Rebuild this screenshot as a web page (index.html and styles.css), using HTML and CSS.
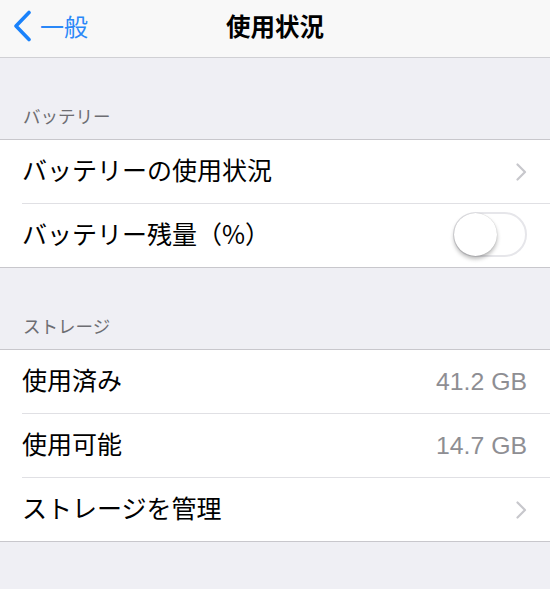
FILE: index.html
```html
<!DOCTYPE html>
<html lang="ja">
<head>
<meta charset="utf-8">
<title>使用状況</title>
<link rel="stylesheet" href="styles.css">
</head>
<body>
<header class="navbar">
  <div class="nav-left">
    <svg class="back-chevron" width="20" height="32" viewBox="0 0 20 32"><path d="M17 2.5 L4 16 L17 29.5" fill="none" stroke="#1a82fb" stroke-width="3.6" stroke-linecap="round" stroke-linejoin="round"/></svg>
    <span class="back-text">一般</span>
  </div>
  <div class="nav-title">使用状況</div>
  <div class="nav-right"></div>
</header>

<div class="section-header">バッテリー</div>
<div class="group">
  <div class="row">
    <div class="row-inner">
      <span class="label">バッテリーの使用状況</span>
      <svg class="chevron" width="11" height="18" viewBox="0 0 11 18"><path d="M1.5 1.5 L9 9 L1.5 16.5" fill="none" stroke="#c7c7cc" stroke-width="2.2" stroke-linecap="round" stroke-linejoin="round"/></svg>
    </div>
  </div>
  <div class="row">
    <div class="row-inner last">
      <span class="label">バッテリー残量（%）</span>
      <span class="toggle"><span class="knob"></span></span>
    </div>
  </div>
</div>

<div class="section-header">ストレージ</div>
<div class="group">
  <div class="row">
    <div class="row-inner">
      <span class="label">使用済み</span>
      <span class="value">41.2 GB</span>
    </div>
  </div>
  <div class="row">
    <div class="row-inner">
      <span class="label">使用可能</span>
      <span class="value">14.7 GB</span>
    </div>
  </div>
  <div class="row">
    <div class="row-inner last">
      <span class="label">ストレージを管理</span>
      <svg class="chevron" width="11" height="18" viewBox="0 0 11 18"><path d="M1.5 1.5 L9 9 L1.5 16.5" fill="none" stroke="#c7c7cc" stroke-width="2.2" stroke-linecap="round" stroke-linejoin="round"/></svg>
    </div>
  </div>
</div>
</body>
</html>
```

FILE: styles.css
```css
html, body {
  margin: 0;
  padding: 0;
}
body {
  background: #efeff4;
  font-family: "Noto Sans CJK JP", "Noto Sans", sans-serif;
  color: #000;
  width: 550px;
  height: 589px;
  overflow: hidden;
}
.navbar {
  height: 57px;
  background: #f8f8f8;
  border-bottom: 1px solid #d0d0d4;
  display: grid;
  grid-template-columns: 1fr auto 1fr;
  align-items: center;
}
.nav-left {
  display: flex;
  align-items: center;
  padding-left: 12px;
  gap: 8px;
  height: 57px;
}
.back-chevron {
  display: block;
  margin-top: -6px;
}
.back-text {
  color: #2a88f8;
  font-size: 24px;
  line-height: 30px;
  margin-top: -6px;
}
.nav-title {
  font-size: 24.5px;
  font-weight: 700;
  line-height: 30px;
  margin-top: -6px;
}
.section-header {
  height: 24px;
  padding: 46px 0 11px 23px;
  font-size: 17.5px;
  line-height: 24px;
  color: #6d6d72;
}
.group {
  background: #fff;
  border-top: 1px solid #c8c7cc;
  border-bottom: 1px solid #c8c7cc;
}
.row {
  padding-left: 22px;
}
.row-inner {
  height: 63px;
  display: flex;
  align-items: center;
  justify-content: space-between;
  padding-right: 23px;
  border-bottom: 1px solid #e0e0e4;
}
.row-inner.last {
  border-bottom: none;
}
.label {
  font-size: 25px;
  line-height: 32px;
  margin-top: -5px;
}
.value {
  font-family: "Liberation Sans", Arial, sans-serif;
  font-size: 24.8px;
  color: #8e8e93;
  line-height: 32px;
}
.chevron {
  display: block;
  margin-right: 0;
}
.toggle {
  box-sizing: border-box;
  width: 74px;
  height: 45px;
  border: 2px solid #e6e6ea;
  border-radius: 23px;
  background: #fff;
  position: relative;
  margin-top: -2px;
}
.knob {
  position: absolute;
  left: -1px;
  top: -1px;
  width: 43px;
  height: 43px;
  border-radius: 50%;
  background: #fff;
  box-shadow: 0 3px 4px rgba(0, 0, 0, 0.28), 0 0 1px rgba(0, 0, 0, 0.25);
}
```
